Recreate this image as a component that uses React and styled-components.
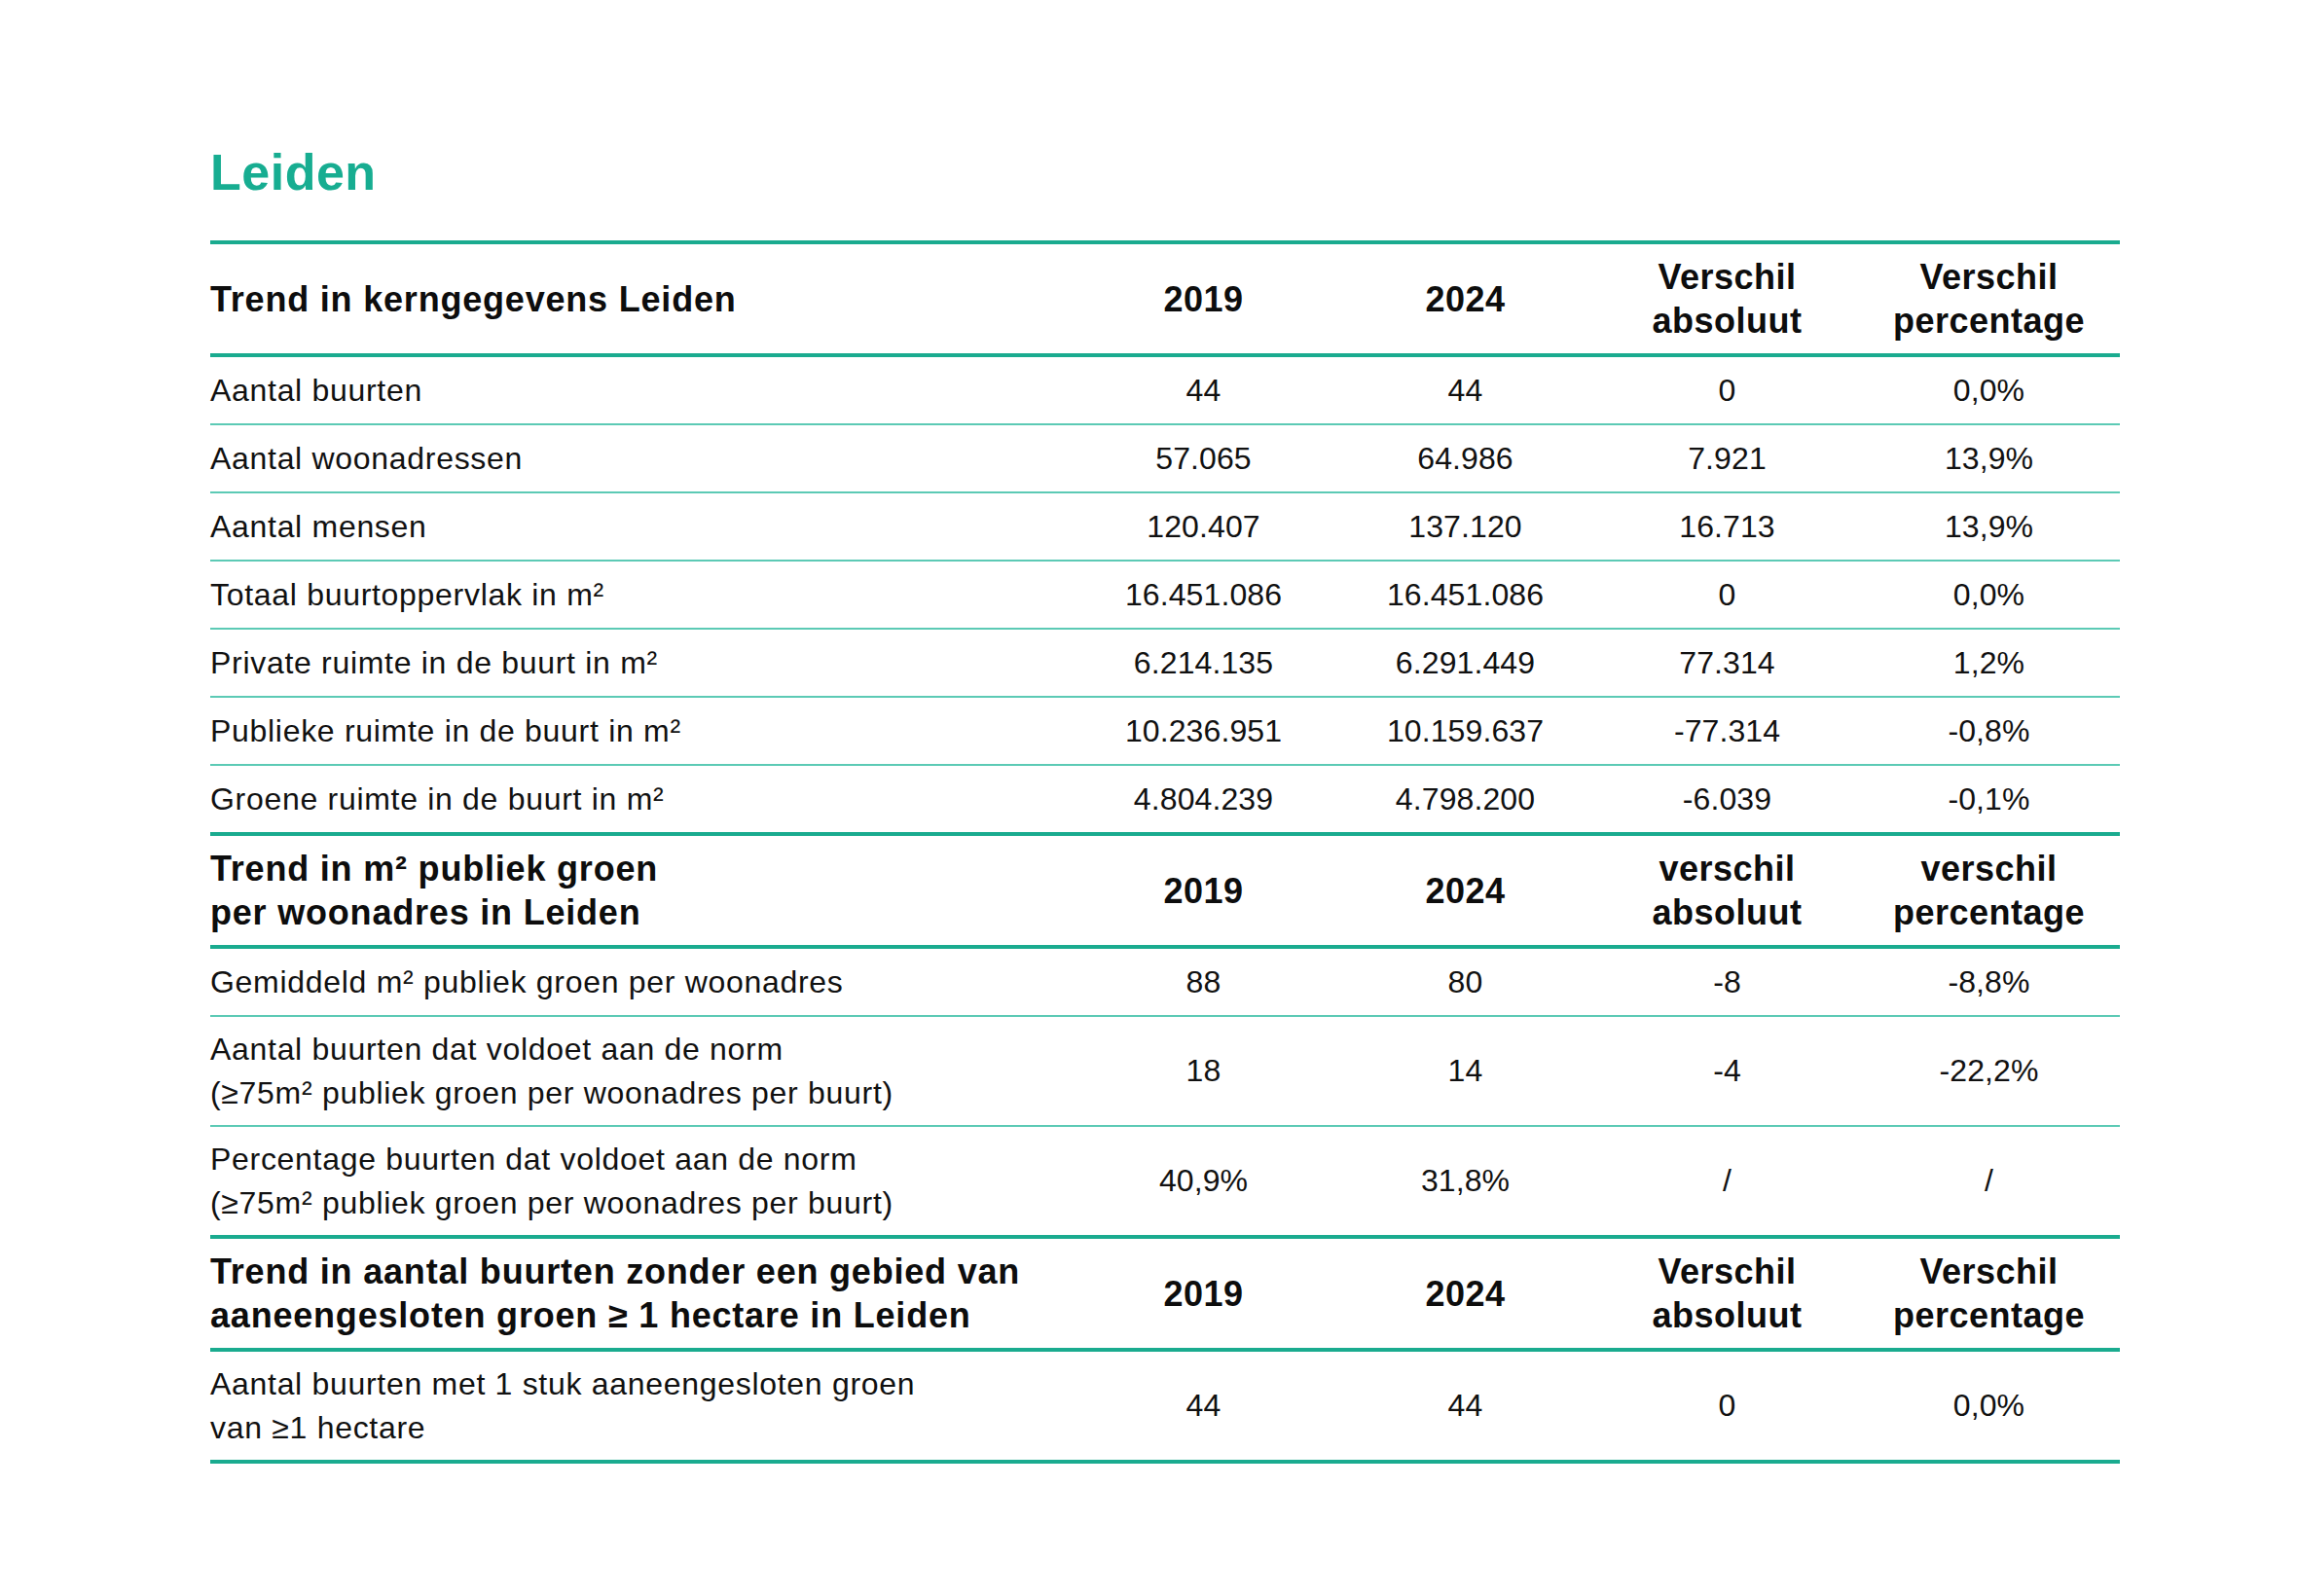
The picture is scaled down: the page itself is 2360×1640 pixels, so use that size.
import React from "react";
import styled, { createGlobalStyle } from "styled-components";

const GlobalStyle = createGlobalStyle`
  html, body {
    margin: 0;
    padding: 0;
    background: #ffffff;
  }
  body {
    font-family: "Liberation Sans", Arial, Helvetica, sans-serif;
    color: #111111;
  }
`;

const THICK = "#1aab8f";
const THIN = "#5ccab5";

const Page = styled.div`
  width: 2360px;
  min-height: 1640px;
  box-sizing: border-box;
  padding: 147px 182px 0 216px;
  background: #ffffff;
`;

const Title = styled.h1`
  margin: 0 0 40px 0;
  font-family: "Liberation Sans", Arial, sans-serif;
  font-size: 52px;
  line-height: 60px;
  font-weight: 700;
  color: #17ad91;
  letter-spacing: 0.5px;
`;

const Table = styled.div`
  width: 1962px;
  border-bottom: 4px solid ${THICK};
`;

const Row = styled.div`
  display: grid;
  grid-template-columns: 886px repeat(4, 269px);
  align-items: center;
  padding: ${(p) => (p.$tall ? "10.5px 0" : "11.5px 0")};
  min-height: ${(p) => (p.$tall ? "90px" : "45px")};
`;

const HeaderRow = styled(Row)`
  border-top: 4px solid ${THICK};
  border-bottom: 4px solid ${THICK};
  padding: 11px 0;
  min-height: 90px;
`;

const BodyRow = styled(Row)`
  & + & {
    border-top: 2px solid ${THIN};
  }
`;

const HeadCell = styled.div`
  font-size: 36px;
  line-height: 45px;
  font-weight: 700;
  letter-spacing: ${(p) => (p.$first ? "0.8px" : "0.5px")};
  color: #0d0d0d;
  text-align: ${(p) => (p.$first ? "left" : "center")};
`;

const Cell = styled.div`
  font-size: 32px;
  line-height: 45px;
  font-weight: 400;
  letter-spacing: ${(p) => (p.$first ? "0.7px" : "0.1px")};
  color: #111111;
  text-align: ${(p) => (p.$first ? "left" : "center")};
`;

const Lines = ({ text }) =>
  text.split("\n").map((line, i, arr) => (
    <React.Fragment key={i}>
      {line}
      {i < arr.length - 1 && <br />}
    </React.Fragment>
  ));

const sections = [
  {
    head: [
      "Trend in kerngegevens Leiden",
      "2019",
      "2024",
      "Verschil\nabsoluut",
      "Verschil\npercentage",
    ],
    rows: [
      ["Aantal buurten", "44", "44", "0", "0,0%"],
      ["Aantal woonadressen", "57.065", "64.986", "7.921", "13,9%"],
      ["Aantal mensen", "120.407", "137.120", "16.713", "13,9%"],
      ["Totaal buurtoppervlak in m²", "16.451.086", "16.451.086", "0", "0,0%"],
      ["Private ruimte in de buurt in m²", "6.214.135", "6.291.449", "77.314", "1,2%"],
      ["Publieke ruimte in de buurt in m²", "10.236.951", "10.159.637", "-77.314", "-0,8%"],
      ["Groene ruimte in de buurt in m²", "4.804.239", "4.798.200", "-6.039", "-0,1%"],
    ],
  },
  {
    head: [
      "Trend in m² publiek groen\nper woonadres in Leiden",
      "2019",
      "2024",
      "verschil\nabsoluut",
      "verschil\npercentage",
    ],
    rows: [
      ["Gemiddeld m² publiek groen per woonadres", "88", "80", "-8", "-8,8%"],
      [
        "Aantal buurten dat voldoet aan de norm\n(≥75m² publiek groen per woonadres per buurt)",
        "18",
        "14",
        "-4",
        "-22,2%",
      ],
      [
        "Percentage buurten dat voldoet aan de norm\n(≥75m² publiek groen per woonadres per buurt)",
        "40,9%",
        "31,8%",
        "/",
        "/",
      ],
    ],
  },
  {
    head: [
      "Trend in aantal buurten zonder een gebied van\naaneengesloten groen ≥ 1 hectare in Leiden",
      "2019",
      "2024",
      "Verschil\nabsoluut",
      "Verschil\npercentage",
    ],
    rows: [
      [
        "Aantal buurten met 1 stuk aaneengesloten groen\nvan ≥1 hectare",
        "44",
        "44",
        "0",
        "0,0%",
      ],
    ],
  },
];

export default function App() {
  return (
    <>
      <GlobalStyle />
      <Page>
        <Title>Leiden</Title>
        <Table>
          {sections.map((sec, si) => (
            <React.Fragment key={si}>
              <HeaderRow>
                {sec.head.map((h, i) => (
                  <HeadCell key={i} $first={i === 0}>
                    <Lines text={h} />
                  </HeadCell>
                ))}
              </HeaderRow>
              {sec.rows.map((r, ri) => (
                <BodyRow key={ri} $tall={r[0].includes("\n")}>
                  {r.map((c, ci) => (
                    <Cell key={ci} $first={ci === 0}>
                      <Lines text={c} />
                    </Cell>
                  ))}
                </BodyRow>
              ))}
            </React.Fragment>
          ))}
        </Table>
      </Page>
    </>
  );
}
